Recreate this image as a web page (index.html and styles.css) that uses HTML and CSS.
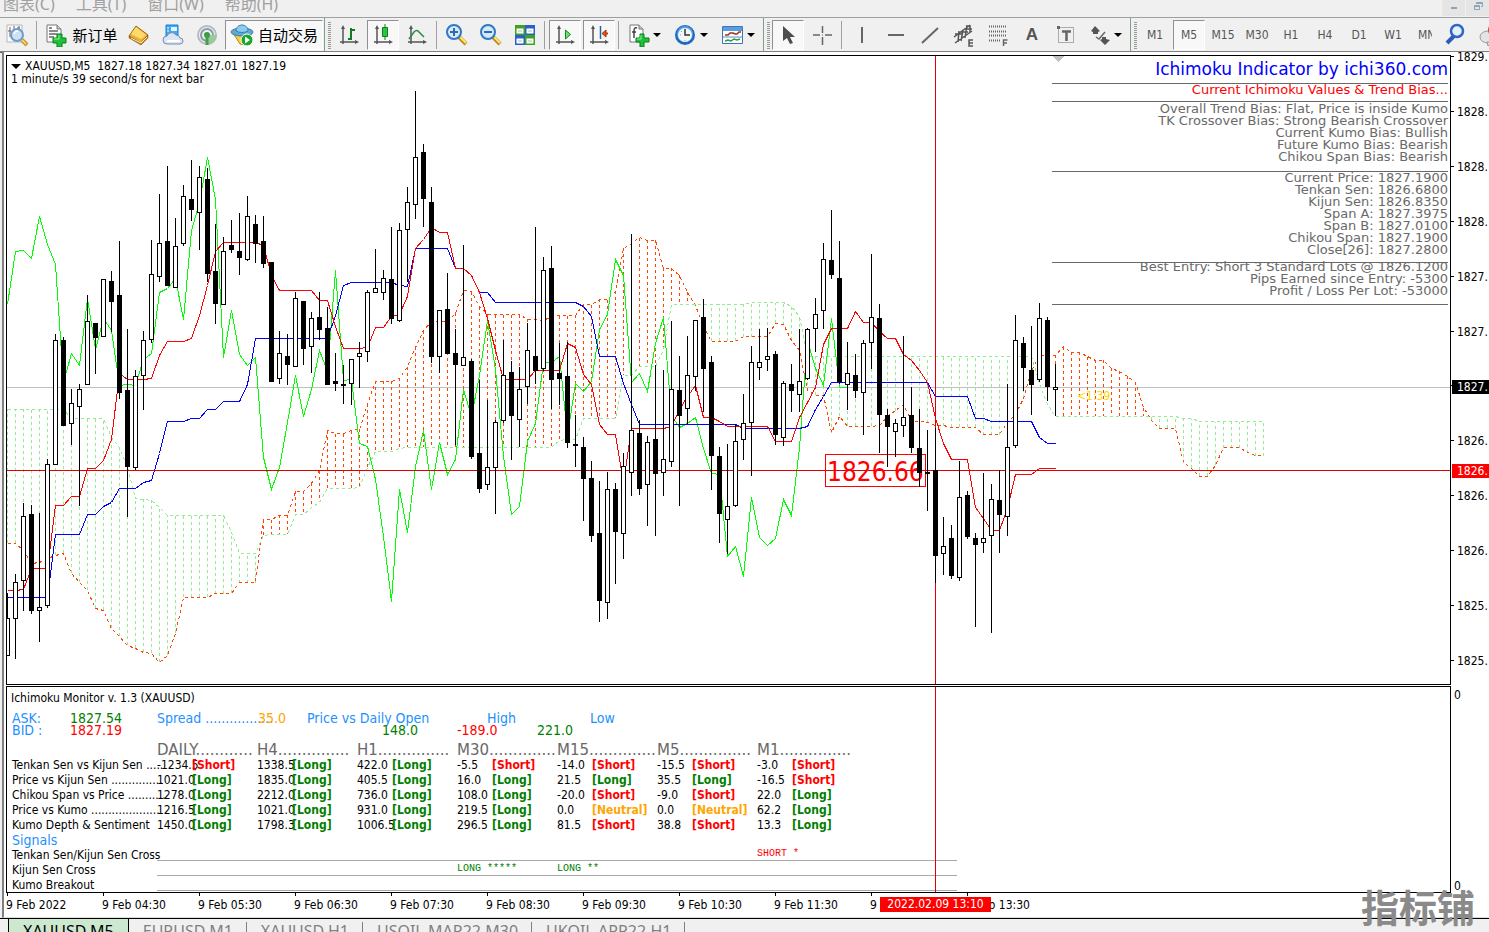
FILE: index.html
```html
<!DOCTYPE html>
<html lang="zh">
<head>
    <meta charset="UTF-8">
    <meta name="viewport" content="width=device-width, initial-scale=1.0">
    <title>XAUUSD,M5</title>
    <link rel="stylesheet" href="styles.css">
</head>
<body>
    <div class="menubar">
        <button>图表(C)</button>
        <button>工具(T)</button>
        <button>窗口(W)</button>
        <button>帮助(H)</button>
        <div class="winButtons">
            <button aria-label="minimize"><svg width="10" height="10"><path d="M2 7h6" stroke="#8fa3b5" stroke-width="2"/></svg></button>
            <button aria-label="restore"><svg width="10" height="10" fill="none" stroke="#8fa3b5"><path d="M3.500 3V1.500h6v4H8M1.500 4.500h5v4h-5zM1.500 5.500h5M3.500 2.500h6"/></svg></button>
        </div>
    </div>

    <div class="toolbar">
        <button class="tool" aria-label="data window">
            <svg width="24" height="24" viewBox="0 0 24 24"><path d="M2 2h15v17H2z" fill="#fafafa" stroke="#b8b8b8"/><path d="M5 4v10M9 3v6M14 3v5M3 8h3M12 5h3" stroke="#666" fill="none"/><path d="M17 17l5 5" stroke="#c9952a" stroke-width="4"/><path d="M17 17l4 4" stroke="#ffe27a" stroke-width="1.500"/><circle cx="12" cy="12" r="6" fill="#c5ddf2" fill-opacity=".85" stroke="#6f9ccc" stroke-width="2"/><path d="M9 11a4 4 0 014-3" stroke="#fff" fill="none" stroke-width="1.500"/></svg>
        </button>
        <span class="sep"></span>
        <button class="tool wide order">
            <svg width="24" height="24" viewBox="0 0 24 24"><path d="M3 2h10l4 4v13H3z" fill="#fff" stroke="#777"/><path d="M13 2v4h4" fill="#ccc" stroke="#777"/><path d="M5 5h3M5 8h9M5 11h8M5 14h5" stroke="#666" stroke-width="1.500"/><path d="M13 11h5v4h4v5h-4v4h-5v-4H9v-5h4z" fill="#1fc13a" stroke="#087d18"/><path d="M15 12v4h-5" stroke="#8df59a" fill="none"/></svg>
            <span>新订单</span>
        </button>
        <button class="tool" aria-label="market watch">
            <svg width="24" height="24" viewBox="0 0 24 24"><path d="M9 3l12 9-7 8L2 13z" fill="#e8b437" stroke="#9a6413"/><path d="M9 4l10 8-5 4L4 11z" fill="#ffd96a"/><path d="M2 13l12 7 7-8v3l-7 7L2 15z" fill="#b77a1b" stroke="#8a5710" stroke-width=".500"/><path d="M4 15l10 5 6-6" stroke="#fff3c0" fill="none"/></svg>
        </button>
        <button class="tool" aria-label="cloud">
            <svg width="24" height="24" viewBox="0 0 24 24"><path d="M5 2h12v13H5z" fill="#3cabef" stroke="#1c7fcf"/><path d="M10 4h6v4h-6z" fill="#dff4ff"/><path d="M6 5h2M6 8h2" stroke="#fff"/><path d="M6 21a4 4 0 010-8 5 5 0 019-1 4 4 0 014 3 3 3 0 010 6z" fill="#dbe4f2" stroke="#7489b5"/><path d="M6 18h13" stroke="#fff" stroke-width="2"/></svg>
        </button>
        <button class="tool" aria-label="signals">
            <svg width="24" height="24" viewBox="0 0 24 24" fill="none"><circle cx="12" cy="12" r="9" stroke="#b3bcc4" stroke-width="2"/><circle cx="12" cy="12" r="6" stroke="#8d9ba8" stroke-width="2"/><path d="M12 12h10a10 10 0 01-9 10z" fill="#9cc99b"/><circle cx="12" cy="12" r="3" fill="#3a9a43"/><path d="M12 12v10" stroke="#42a04b" stroke-width="3"/></svg>
        </button>
        <button class="tool wide auto pressed">
            <svg width="24" height="24" viewBox="0 0 24 24"><path d="M3 10h19l-7 12-5-1z" fill="#f2cd45" stroke="#b98b1b"/><ellipse cx="12" cy="9" rx="11" ry="4" fill="#5fa9d6" stroke="#397ca8"/><path d="M6 8c0-8 12-8 12 0-3 2-9 2-12 0z" fill="#8accee" stroke="#397ca8"/><circle cx="17" cy="17" r="6" fill="#18a82c" stroke="#fff"/><path d="M15 13.500v7l5-3.500z" fill="#fff"/></svg>
            <span>自动交易</span>
        </button>
        <span class="grip"></span>
        <button class="tool" aria-label="bar chart">
            <svg width="24" height="24" viewBox="0 0 24 24" fill="none"><path d="M6 4v17M3 19h17" stroke="#555" stroke-width="1.500"/><path d="M6 2l2 4H4zM22 19l-4-2v4z" fill="#555"/><path d="M14 5v12M11 16h3M14 7h4" stroke="#127a22" stroke-width="2"/></svg>
        </button>
        <button class="tool pressed" aria-label="candlesticks">
            <svg width="24" height="24" viewBox="0 0 24 24" fill="none"><path d="M6 4v17M3 19h17" stroke="#555" stroke-width="1.500"/><path d="M6 2l2 4H4zM22 19l-4-2v4z" fill="#555"/><path d="M14 1v16" stroke="#127a22"/><path d="M11.500 4.500h5v9h-5z" fill="#25c93c" stroke="#127a22"/></svg>
        </button>
        <button class="tool" aria-label="line chart">
            <svg width="24" height="24" viewBox="0 0 24 24" fill="none"><path d="M6 4v17M3 19h17" stroke="#555" stroke-width="1.500"/><path d="M6 2l2 4H4zM22 19l-4-2v4z" fill="#555"/><path d="M4 16l5-7q3-3 5 0l5 5" stroke="#2f8a3c" stroke-width="1.500"/></svg>
        </button>
        <span class="sep"></span>
        <button class="tool" aria-label="zoom in">
            <svg width="24" height="24" viewBox="0 0 24 24"><path d="M14 14l7 7" stroke="#b98a1e" stroke-width="4"/><path d="M15 14l6 6" stroke="#ffe46d" stroke-width="2"/><circle cx="9" cy="9" r="7" fill="#d4eafa" stroke="#2f78c2" stroke-width="2"/><path d="M5 9h8M9 5v8" stroke="#2f6bb0" stroke-width="2"/></svg>
        </button>
        <button class="tool" aria-label="zoom out">
            <svg width="24" height="24" viewBox="0 0 24 24"><path d="M14 14l7 7" stroke="#b98a1e" stroke-width="4"/><path d="M15 14l6 6" stroke="#ffe46d" stroke-width="2"/><circle cx="9" cy="9" r="7" fill="#d4eafa" stroke="#2f78c2" stroke-width="2"/><path d="M5 9h8" stroke="#2f6bb0" stroke-width="2"/></svg>
        </button>
        <button class="tool" aria-label="tile windows">
            <svg width="24" height="24" viewBox="0 0 24 24"><path d="M2 2h10v10H2zM12 12h10v10H12z" fill="#3da31e"/><path d="M12 2h10v10H12zM2 12h10v10H2z" fill="#2a5fd0"/><path d="M3.500 5.500h7v5h-7zM13.500 5.500h7v5h-7zM3.500 15.500h7v5h-7zM13.500 15.500h7v5h-7z" fill="#fff"/><path d="M5 8h4M15 8h4M5 18h4M15 18h4" stroke="#a9c2a0"/></svg>
        </button>
        <span class="sep"></span>
        <button class="tool pressed" aria-label="auto scroll">
            <svg width="24" height="24" viewBox="0 0 24 24" fill="none"><path d="M6 4v17M3 19h17" stroke="#555" stroke-width="1.500"/><path d="M6 2l2 4H4zM22 19l-4-2v4z" fill="#555"/><path d="M12.500 7v9l5-4.500z" fill="#6be070" stroke="#118a24"/></svg>
        </button>
        <button class="tool pressed" aria-label="chart shift">
            <svg width="24" height="24" viewBox="0 0 24 24" fill="none"><path d="M6 4v17M3 19h17" stroke="#555" stroke-width="1.500"/><path d="M6 2l2 4H4zM22 19l-4-2v4z" fill="#555"/><path d="M13.500 3v13" stroke="#1c6a9c" stroke-width="1.500"/><path d="M21 10.500h-3" stroke="#c0420c" stroke-width="2"/><path d="M15 10.500l4-3.500v7z" fill="#e2561b" stroke="#a8330a"/></svg>
        </button>
        <span class="sep"></span>
        <button class="tool drop" aria-label="indicators">
            <svg width="24" height="24" viewBox="0 0 24 24"><path d="M3 2h9l4 4v13H3z" fill="#fff" stroke="#777"/><path d="M12 2v4h4" fill="#ccc" stroke="#777"/><path d="M10 5q-3-1-3 3v7M5 9h4" stroke="#444" fill="none" stroke-width="1.500"/><path d="M13 11h4v4h5v4h-5v5h-4v-5H9v-4h4z" fill="#1fc13a" stroke="#087d18"/><path d="M14 12v4h-4" stroke="#8df59a" fill="none"/></svg>
            <i class="caret"></i>
        </button>
        <button class="tool drop" aria-label="periods">
            <svg width="24" height="24" viewBox="0 0 24 24"><circle cx="11" cy="12" r="10" fill="#1d69bd"/><circle cx="11" cy="11" r="8" fill="#4fa0ea"/><circle cx="11" cy="12" r="7" fill="#f3f6f9"/><path d="M11 6v6h5" stroke="#333" stroke-width="1.500" fill="none"/><path d="M6 12h1M11 17v1M7 8l1 1" stroke="#999"/></svg>
            <i class="caret"></i>
        </button>
        <button class="tool drop" aria-label="templates">
            <svg width="24" height="24" viewBox="0 0 24 24"><path d="M1.500 3.500h20v17h-20z" fill="#fff" stroke="#3d76b8"/><path d="M2 4h19v4H2z" fill="#5b9ee0"/><path d="M2 14h19" stroke="#5b8ec4"/><path d="M4 12h3l2-2h3l2 1h2l2-2h2" stroke="#a33018" fill="none" stroke-width="1.500"/><path d="M4 18l3-1 3 1 3-2 3 1 3-1" stroke="#2d9a3f" fill="none" stroke-width="1.500"/></svg>
            <i class="caret"></i>
        </button>
        <span class="grip"></span>
        <button class="tool pressed" aria-label="cursor">
            <svg width="24" height="24" viewBox="0 0 24 24"><path d="M7 3v15l4-3 3 6 3-1-3-6h5z" fill="#4d4d4d"/></svg>
        </button>
        <button class="tool" aria-label="crosshair">
            <svg width="24" height="24" viewBox="0 0 24 24"><path d="M12.500 3v7M12.500 14v8M3 12h7M15 12h7" stroke="#666" stroke-width="1.500"/><path d="M12 12h1" stroke="#666"/></svg>
        </button>
        <span class="sep"></span>
        <button class="tool" aria-label="vertical line"><svg width="24" height="24"><path d="M12 4v16" stroke="#666" stroke-width="2"/></svg></button>
        <button class="tool" aria-label="horizontal line"><svg width="24" height="24"><path d="M4 12h16" stroke="#666" stroke-width="2"/></svg></button>
        <button class="tool" aria-label="trendline"><svg width="24" height="24"><path d="M4 20L20 5" stroke="#666" stroke-width="2"/></svg></button>
        <button class="tool" aria-label="channel">
            <svg width="24" height="24" viewBox="0 0 24 24" fill="none" stroke="#555" stroke-width="1.500"><path d="M2 14L18 2M3 20L20 8M7 8l-1 11M11 7l-2 11M15 2l-2 13M3 11h7M8 9h8M12 6h8M18 2v7"/><path d="M21 17h-4v6h4M17 20h4" stroke-width="1.500"/></svg>
        </button>
        <button class="tool" aria-label="fibonacci">
            <svg width="24" height="24" viewBox="0 0 24 24" fill="none" stroke="#666"><path d="M3 3.500h18M3 8.500h18M3 12.500h18M3 17.500h12" stroke-dasharray="1 1" stroke-width="2"/><path d="M17.500 23v-6h4M17 20h4" stroke-width="1.500"/></svg>
        </button>
        <button class="tool letter">A</button>
        <button class="tool" aria-label="text label">
            <svg width="24" height="24" viewBox="0 0 24 24" fill="none" stroke="#666"><path d="M4.500 4.500h15v15h-15z" stroke-dasharray="1 1"/><path d="M8 8.500h9M12.500 8v10" stroke-width="2.500"/><path d="M3 3h3v3H3z" fill="#666" stroke="none"/></svg>
        </button>
        <button class="tool drop" aria-label="arrows">
            <svg width="24" height="24" viewBox="0 0 24 24"><path d="M7 3l5 5-2 1v2H5V9L3 8zM17 22l-5-5 2-1v-2h4v2l4 1z" fill="#555"/><path d="M8 14l3 2 6-7" stroke="#666" stroke-width="1.500" fill="none"/></svg>
            <i class="caret"></i>
        </button>
        <span class="grip"></span>
        <button class="tool">M1</button>
        <button class="tool pressed">M5</button>
        <button class="tool">M15</button>
        <button class="tool">M30</button>
        <button class="tool">H1</button>
        <button class="tool">H4</button>
        <button class="tool">D1</button>
        <button class="tool">W1</button>
        <button class="tool cut">MN</button>
        <button class="tool find" aria-label="search">
            <svg width="24" height="24" viewBox="0 0 24 24" fill="none"><path d="M11 13l-7 7" stroke="#2c5cb8" stroke-width="4"/><circle cx="14" cy="8" r="6" fill="#e6effc" stroke="#2f66c8" stroke-width="2.500"/></svg>
        </button>
        <button class="tool chat" aria-label="messages">
            <svg width="24" height="24" viewBox="0 0 24 24"><ellipse cx="11" cy="14" rx="8" ry="6" fill="#e4e4e8" stroke="#999"/><path d="M10 19l1 4 4-4z" fill="#ddd" stroke="#999"/><circle cx="18" cy="7" r="7" fill="#d8432b"/></svg>
        </button>
    </div>

    <div class="window">
        <div class="row">
            <div class="pane price">
                <svg id="chart" class="plot"></svg>
                <div class="title">
                    <p><i class="caret"></i>XAUUSD,M5&nbsp; 1827.18 1827.34 1827.01 1827.19</p>
                    <p>1 minute/s 39 second/s for next bar</p>
                </div>
                <div class="info">
                    <h1>Ichimoku Indicator by ichi360.com</h1>
                    <h2>Current Ichimoku Values &amp; Trend Bias...</h2>
                    <div class="block bias">
                        <p>Overall Trend Bias: Flat, Price is inside Kumo</p>
                        <p>TK Crossover Bias: Strong Bearish Crossover</p>
                        <p>Current Kumo Bias: Bullish</p>
                        <p>Future Kumo Bias: Bearish</p>
                        <p>Chikou Span Bias: Bearish</p>
                    </div>
                    <div class="block values">
                        <p>Current Price: 1827.1900</p>
                        <p>Tenkan Sen: 1826.6800</p>
                        <p>Kijun Sen: 1826.8350</p>
                        <p>Span A: 1827.3975</p>
                        <p>Span B: 1827.0100</p>
                        <p>Chikou Span: 1827.1900</p>
                        <p>Close[26]: 1827.2800</p>
                    </div>
                    <div class="block entry">
                        <p>Best Entry: Short 3 Standard Lots @ 1826.1200</p>
                        <p>Pips Earned since Entry: -5300</p>
                        <p>Profit / Loss Per Lot: -53000</p>
                    </div>
                </div>
            </div>
            <div class="axis prices">
                <span>1829.</span>
                <span>1828.</span>
                <span>1828.</span>
                <span>1828.</span>
                <span>1827.</span>
                <span>1827.</span>
                <span class="tick"></span>
                <span>1826.</span>
                <span>1826.</span>
                <span>1826.</span>
                <span>1825.</span>
                <span>1825.</span>
                <b class="now">1827.</b>
                <b class="cross">1826.</b>
            </div>
        </div>

        <div class="row">
            <div class="pane monitor">
                <p class="name">Ichimoku Monitor v. 1.3 (XAUUSD)</p>
                <div class="quotes">
                    <span class="c1 blue">ASK:</span><span class="c2 green">1827.54</span>
                    <span class="c3 blue">Spread .................</span><span class="c4 orange">35.0</span>
                    <span class="c5 blue">Price vs Daily Open</span><span class="c8 blue">High</span><span class="c10 blue">Low</span>
                    <span class="c1 blue">BID :</span><span class="c2 red">1827.19</span>
                    <span class="c6 green">148.0</span><span class="c7 red">-189.0</span><span class="c9 green">221.0</span>
                </div>
                <table class="trend">
                    <thead>
                        <tr><th class="label"></th><th colspan="2">DAILY............</th><th colspan="2">H4...............</th><th colspan="2">H1...............</th><th colspan="2">M30..............</th><th colspan="2">M15..............</th><th colspan="2">M5...............</th><th colspan="2">M1...............</th></tr>
                    </thead>
                    <tbody id="trend"></tbody>
                </table>
                <p class="signals blue">Signals</p>
                <div class="signal"><span>Tenkan Sen/Kijun Sen Cross</span><div><em></em><em></em><em></em><em></em><em></em><em></em><em class="red">SHORT *</em></div></div>
                <div class="signal"><span>Kijun Sen Cross</span><div><em></em><em></em><em></em><em class="green">LONG *****</em><em class="green">LONG **</em></div></div>
                <div class="signal"><span>Kumo Breakout</span><div></div></div>
                <i class="vline"></i>
            </div>
            <div class="axis zero"><span>0</span><span>0</span></div>
        </div>

        <div class="times">
            <span>9 Feb 2022</span>
            <span>9 Feb 04:30</span>
            <span>9 Feb 05:30</span>
            <span>9 Feb 06:30</span>
            <span>9 Feb 07:30</span>
            <span>9 Feb 08:30</span>
            <span>9 Feb 09:30</span>
            <span>9 Feb 10:30</span>
            <span>9 Feb 11:30</span>
            <span>9 Feb 12:30</span>
            <span>9 Feb 13:30</span>
            <b>2022.02.09 13:10</b>
        </div>
    </div>

    <div class="tabs">
        <button class="active">XAUUSD,M5</button>
        <button>EURUSD,M1</button>
        <button>XAUUSD,H1</button>
        <button>USOIL,MAR22,M30</button>
        <button>UKOIL,APR22,H1</button>
    </div>
    <div class="mark">指标铺</div>

    <script src="script.js"></script>
</body>
</html>
```

FILE: styles.css
```css
* {
    box-sizing: border-box;
    margin: 0;
    padding: 0;
}
body {
    height: 100vh;
    overflow: hidden;
    position: relative;
    background: #f0f0f0;
    color: #000;
    font-family: "DejaVu Sans Condensed", "DejaVu Sans", "Noto Sans CJK SC", sans-serif;
    font-size: 12px;
}
button {
    border: none;
    background: none;
    font: inherit;
    color: inherit;
}
.red { color: #f00; }
.green { color: #008000; }
.blue { color: #1e90ff; }
.orange { color: #ffa500; }

/* menu */
.menubar {
    height: 30px;
    margin-top: -12px;
    padding-left: 3px;
    display: flex;
    gap: 21px;
    border-bottom: 1px solid #a0a0a0;
    color: #a0a0a0;
    font-family: "Noto Sans", "Noto Sans CJK SC", sans-serif;
    font-size: 16px;
}
.menubar > button {
    height: 32px;
    line-height: 32px;
}
.winButtons {
    margin-left: auto;
    display: flex;
    gap: 1px;
}
.winButtons button {
    width: 23px;
    height: 28px;
    padding-top: 6px;
    background: #e5e5e5;
}

/* toolbar */
.toolbar {
    height: 34px;
    display: flex;
    align-items: center;
    overflow: hidden;
    border-bottom: 1px solid #808080;
    box-shadow: 0 1px 0 #606060;
}
.tool {
    flex: none;
    width: 32px;
    height: 30px;
    margin: 0 1px;
    display: flex;
    align-items: center;
    justify-content: center;
    color: #555;
    font-size: 12px;
    border: 1px solid transparent;
}
.tool svg {
    flex: none;
}
.pressed {
    background: #f8f8f8;
    border-color: #909090 #fff #fff #909090;
}
.wide {
    gap: 4px;
    color: #000;
    font-family: "Noto Sans CJK SC", sans-serif;
    font-size: 15px;
    white-space: nowrap;
}
.order { width: 80px; }
.auto { width: 98px; }
.drop {
    width: 45px;
    padding-left: 3px;
    gap: 2px;
    justify-content: flex-start;
}
.letter {
    font-family: "Liberation Sans", sans-serif;
    font-size: 17px;
    font-weight: bold;
}
.cut {
    width: 22px;
    padding-left: 6px;
    overflow: hidden;
    justify-content: flex-start;
}
.find { margin-left: 5px; }
.caret {
    flex: none;
    border: 4px solid transparent;
    border-top-color: #000;
    border-bottom-width: 0;
}
.sep {
    flex: none;
    width: 1px;
    height: 28px;
    margin: 0 3px 0 2px;
    background: #a0a0a0;
}
.grip {
    flex: none;
    width: 8px;
    height: 33px;
    border-left: 1px solid #7fa287;
    background: repeating-linear-gradient(#999 0 1px, transparent 1px 2px) 3px 4px / 3px 27px no-repeat;
}

/* chart window */
.window {
    margin-left: 2px;
    padding: 3px 0 0 2px;
    background: #fff;
    border-left: 2px solid #808080;
    border-bottom: 1px solid #dcdcdc;
}
.row {
    display: flex;
    margin-bottom: 1px;
}
.pane {
    flex: 1;
    min-width: 0;
    position: relative;
    overflow: hidden;
    border: 1px solid #000;
}
.price { height: 630px; }
.plot {
    position: absolute;
    width: 100%;
    height: 100%;
}
.title {
    position: absolute;
    top: 4px;
    left: 4px;
    line-height: 13px;
}
.title .caret {
    display: inline-block;
    border-width: 5px 5px 0;
    margin: 0 4px 1px 0;
}
.info {
    position: absolute;
    top: 0;
    right: 2px;
    width: 396px;
    text-align: right;
    font-family: "DejaVu Sans", sans-serif;
    font-size: 13px;
    line-height: 12px;
    color: #696969;
    white-space: nowrap;
    border-bottom: 1px solid #696969;
}
.info h1 {
    height: 27px;
    line-height: 26px;
    font-size: 17px;
    font-weight: normal;
    color: #00f;
}
.info h2 {
    height: 18px;
    line-height: 12px;
    font-size: 13px;
    font-weight: normal;
    color: #f00;
    border-top: 1px solid #696969;
}
.block { border-top: 1px solid #696969; }
.bias {
    height: 70px;
    padding-top: 1px;
}
.values { height: 91px; }
.entry { height: 42px; }
.entry p:first-child { margin-top: -2px; }

.axis {
    flex: none;
    width: 38px;
    position: relative;
    overflow: hidden;
}
.prices {
    display: flex;
    flex-direction: column;
    justify-content: space-between;
    margin: -5px 0 17px;
}
.prices span {
    height: 14px;
    line-height: 14px;
    display: flex;
    gap: 3px;
}
.prices span::before {
    content: "";
    width: 3px;
    height: 1px;
    margin-top: 6px;
    background: #000;
}
.prices b {
    position: absolute;
    left: 1px;
    width: 100%;
    height: 14px;
    padding-left: 5px;
    line-height: 14px;
    font-weight: normal;
    color: #fff;
}
.now {
    top: 330px;
    background: #000;
}
.cross {
    top: 414px;
    background: #f00;
}
.zero {
    padding: 2px 0 0 3px;
    display: flex;
    flex-direction: column;
    justify-content: space-between;
}

/* monitor */
.monitor {
    height: 207px;
    padding: 4px 0 0 5px;
    white-space: nowrap;
}
.name {
    height: 21px;
    line-height: 14px;
    margin-left: -1px;
}
.quotes {
    display: grid;
    grid-template-columns: 58px 87px 101px 49px 75px 75px 30px 50px 53px 60px;
    grid-auto-rows: 12px;
    font-size: 14px;
    line-height: 12px;
    margin-bottom: 7px;
}
.c1 { grid-column: 1; }
.c2 { grid-column: 2; }
.c3 { grid-column: 3; }
.c4 { grid-column: 4; }
.c5 { grid-column: 5; }
.c6 { grid-column: 6; }
.c7 { grid-column: 7; }
.c8 { grid-column: 8; }
.c9 { grid-column: 9; }
.c10 { grid-column: 10; }
.trend {
    width: 845px;
    table-layout: fixed;
    border-collapse: collapse;
    line-height: 15px;
}
.trend th {
    text-align: left;
    font-weight: normal;
    color: #000;
}
.trend thead th {
    font-family: "DejaVu Sans", sans-serif;
    font-size: 15px;
    color: #696969;
}
.trend .label { width: 145px; }
.trend b { margin-left: -15px; }
.signals {
    height: 13px;
    line-height: 14px;
    font-size: 14px;
}
.signal {
    display: flex;
    height: 15px;
}
.signal span {
    width: 145px;
    padding-top: 2px;
}
.signal div {
    width: 800px;
    display: flex;
    border-bottom: 1px solid #a9a9a9;
}
.signal em {
    width: 100px;
    font-family: "Liberation Mono", monospace;
    font-size: 10px;
    font-style: normal;
    line-height: 16px;
}
.vline {
    position: absolute;
    top: 0;
    bottom: 0;
    left: 928px;
    border-left: 1px solid #e00000;
}

.times {
    display: flex;
    height: 24px;
    position: relative;
    overflow: hidden;
    margin-top: -1px;
}
.times span {
    flex: none;
    width: 96px;
    padding-top: 5px;
    line-height: 14px;
    background: linear-gradient(#000, #000) 1px 0 / 1px 3px no-repeat;
}
.times b {
    position: absolute;
    top: 4px;
    left: 874px;
    width: 111px;
    height: 15px;
    line-height: 15px;
    text-align: center;
    font-weight: normal;
    color: #fff;
    background: #f00;
}

.tabs {
    display: flex;
    padding-left: 8px;
    border-top: 1px solid #000;
    font-family: "Noto Sans", sans-serif;
    font-size: 16px;
    color: #808080;
}
.tabs button {
    padding: 0 14px;
    height: 24px;
    line-height: 24px;
    background: linear-gradient(#808080, #808080) 100% 3px / 1px 20px no-repeat;
}
.tabs .active {
    color: #000;
    background: #cce8cf;
    border: 1px solid #000;
    border-top: none;
}
.mark {
    position: absolute;
    right: 14px;
    top: 887px;
    font-family: "Noto Sans CJK SC", sans-serif;
    font-size: 38px;
    line-height: 38px;
    font-weight: 700;
    color: #8a8a8a;
}
```

FILE: script.js
```javascript
// candles: high, body top, body bottom, low, 1 = bear
const bars = [
    [593,618,656,656,0],[574,582,619,659,0],[503,516,581,611,0],[505,514,611,614,1],[513,607,611,642,0],[459,464,606,608,0],
    [334,340,465,465,0],[337,340,426,426,1],[389,403,424,445,0],[384,389,407,506,0],[295,321,385,385,0],[323,323,338,374,1],
    [279,279,337,337,0],[271,281,302,332,1],[241,295,393,399,1],[329,390,467,517,1],[370,376,468,470,0],[331,340,376,410,0],
    [240,274,340,343,0],[194,243,277,282,0],[166,241,286,286,1],[218,246,288,288,0],[185,196,244,246,0],[160,199,210,221,1],
    [166,177,213,250,0],[168,179,274,282,1],[224,271,304,324,1],[237,251,305,305,0],[220,245,250,253,1],[213,251,258,275,1],
    [196,216,260,261,0],[215,224,244,263,1],[216,241,264,268,1],[262,262,382,382,1],[331,353,379,384,0],[334,356,365,385,1],
    [292,298,367,367,0],[301,301,349,365,1],[312,318,347,373,0],[292,317,330,340,1],[307,328,385,385,1],[353,381,384,391,1],
    [365,384,385,404,1],[359,359,384,405,0],[342,353,357,388,0],[290,292,352,362,0],[249,288,293,293,0],[270,278,293,300,0],
    [227,279,319,324,1],[223,230,321,322,0],[187,202,230,282,0],[91,157,205,219,0],[144,152,199,227,1],[187,202,357,363,1],
    [310,310,357,373,0],[273,309,354,354,1],[329,353,365,445,1],[245,357,366,366,0],[359,361,457,459,1],[380,453,489,493,1],
    [400,467,485,490,0],[420,422,468,514,0],[340,375,421,423,0],[361,372,416,460,1],[367,389,420,447,0],[323,350,387,404,0],
    [227,356,371,384,1],[257,270,369,371,0],[246,268,380,409,1],[343,373,379,405,1],[342,376,443,448,1],[415,444,446,467,1],
    [437,447,479,521,1],[461,478,536,542,1],[481,533,601,622,1],[472,489,603,619,0],[483,489,532,584,1],[453,466,534,559,0],
    [234,430,473,496,0],[420,433,489,495,1],[436,442,485,526,0],[365,439,474,536,1],[370,459,473,496,0],[321,389,462,467,0],
    [356,390,416,506,1],[336,375,409,424,0],[320,320,377,391,0],[299,317,369,412,1],[356,362,456,490,1],[447,456,514,543,1],
    [444,506,520,554,0],[424,441,506,507,0],[394,423,440,460,0],[346,362,423,476,0],[329,362,368,380,0],[328,356,360,371,0],
    [351,354,435,445,1],[381,383,438,446,0],[364,384,391,412,1],[329,381,395,412,0],[328,329,379,380,0],[298,314,329,352,0],
    [243,259,311,329,0],[210,260,275,279,1],[241,278,382,384,1],[342,373,385,410,0],[354,375,391,398,1],[340,343,393,435,0],
    [254,317,343,369,0],[304,318,415,453,1],[409,415,427,467,1],[419,423,432,457,0],[336,417,426,437,0],[387,415,448,453,1],
    [409,448,473,487,1],[430,472,474,511,1],[428,470,556,583,1],[517,546,554,575,0],[525,538,576,579,1],[461,497,578,581,0],
    [491,495,537,539,1],[533,538,545,627,1],[473,538,543,553,0],[484,499,536,633,0],[470,500,515,553,1],[384,447,517,536,0],
    [315,340,446,448,0],[337,343,368,391,1],[326,370,385,415,1],[303,318,380,382,0],[317,320,387,401,1],[364,387,390,416,0]
];

// middle of the range of the last n bars
function middle (i, n) {
    let part = bars.slice(i - n + 1, i + 1);
    let top = Math.min(...part.map(b => b[0]));
    let low = Math.max(...part.map(b => b[3]));
    return (top + low) / 2;
}

// the first bars need history from before the window
const tenkan = [590,590,589,568,568,568,505,505];
const kijun = [597,597,597,597,597,597,534,534,534,534,514,514,506,502,488,488,488,482,480,453,421,421,421,418,418];
const spanA = [543,543,550,563,562,558,555,553,573,582,590,608,610,628,636,645,648,652,653,662,655,633,597,597,597,597];
const spanB = [409,409,409,409,409,409,409,409,418,418,418,418,418,437,447,467,498,499,500,507,515,515,515,515,515,515,515,515,
    532,553,553,553,535,534,534,534,514,514,507,502,488,488,488,488,487,467,451,451,451,448,447,447,447,447,447,447,447,447,
    447,447,447,447,447,447,447,447,447,447,447,440,439,439,418,418,418,418,418];

for (let i = 8; i < bars.length; i++) tenkan[i] = middle(i, 9);
for (let i = 25; i < bars.length; i++) kijun[i] = middle(i, 26);
for (let i = 0; i < bars.length; i++) {
    spanA[i + 26] = (tenkan[i] + kijun[i]) / 2;
    if (i > 50) spanB[i + 26] = middle(i, 52);
}
const chikou = bars.slice(26).map(b => b[4] ? b[2] : b[1]);

function x (i) {
    return 7.5 + i * 8;
}
function line (data, color, dash) {
    let points = data.map((y, i) => x(i) + "," + (Math.floor(y) + 0.5)).join(" ");
    return `<polyline points="${points}" fill="none" stroke="${color}" ${dash ? 'stroke-dasharray="3 3"' : ""}/>`;
}

function drawChart () {
    let str = '<g transform="translate(-7,-56)" shape-rendering="crispEdges">';
    str += '<path d="M7 387.500h3000" stroke="#c0c0c0"/>';
    spanA.forEach((a, i) => {
        let b = spanB[i];
        str += `<path d="M${x(i)} ${a}V${b}" stroke="${a < b ? "#ff4500" : "#90ee90"}" stroke-dasharray="3 3"/>`;
    });
    str += line(spanA, "#ff4500", true) + line(spanB, "#90ee90", true);
    str += line(chikou, "#00ff00") + line(kijun, "#0000ff") + line(tenkan, "#ff0000");
    str += '<path d="M7 470.500h3000M935.500 56v640" stroke="#e00000"/>';
    str += '<path d="M825.500 454.500h100v32h-100z" fill="none" stroke="#ff0000"/>';
    str += '<text x="827" y="481" font-size="26" fill="#ff0000">1826.66</text>';
    bars.forEach((b, i) => {
        let c = x(i);
        str += `<path d="M${c} ${b[0]}V${b[3]}" stroke="#000"/>`;
        str += `<rect x="${c - 2}" y="${b[1] + 0.5}" width="4" height="${Math.max(b[2] - b[1] - 1, 1)}" fill="${b[4] ? "#000" : "#fff"}" stroke="#000"/>`;
    });
    str += '<text x="1077" y="400" font-size="12" fill="#ffd700">&lt;1:39</text>';
    str += '<path d="M1052 56h13l-6.500 6z" fill="#c0c0c0"/></g>';
    document.getElementById("chart").innerHTML = str;
}

const rows = [
    ["Tenkan Sen vs Kijun Sen .....", "-1234.5 S", "1338.5 L", "422.0 L", "-5.5 S", "-14.0 S", "-15.5 S", "-3.0 S"],
    ["Price vs Kijun Sen ...............", "1021.0 L", "1835.0 L", "405.5 L", "16.0 L", "21.5 L", "35.5 L", "-16.5 S"],
    ["Chikou Span vs Price ...........", "1278.0 L", "2212.0 L", "736.0 L", "108.0 L", "-20.0 S", "-9.0 S", "22.0 L"],
    ["Price vs Kumo ....................", "1216.5 L", "1021.0 L", "931.0 L", "219.5 L", "0.0 N", "0.0 N", "62.2 L"],
    ["Kumo Depth & Sentiment", "1450.0 L", "1798.3 L", "1006.5 L", "296.5 L", "81.5 S", "38.8 S", "13.3 L"]
];
const states = { S: ["red", "[Short]"], L: ["green", "[Long]"], N: ["orange", "[Neutral]"] };

function drawTrend () {
    let str = "";
    for (let row of rows) {
        str += `<tr><th>${row[0].replace("&", "&amp;")}</th>`;
        for (let cell of row.slice(1)) {
            let [value, state] = cell.split(" ");
            str += `<td>${value}</td><td><b class="${states[state][0]}">${states[state][1]}</b></td>`;
        }
        str += "</tr>";
    }
    document.getElementById("trend").innerHTML = str;
}

drawChart();
drawTrend();
```
